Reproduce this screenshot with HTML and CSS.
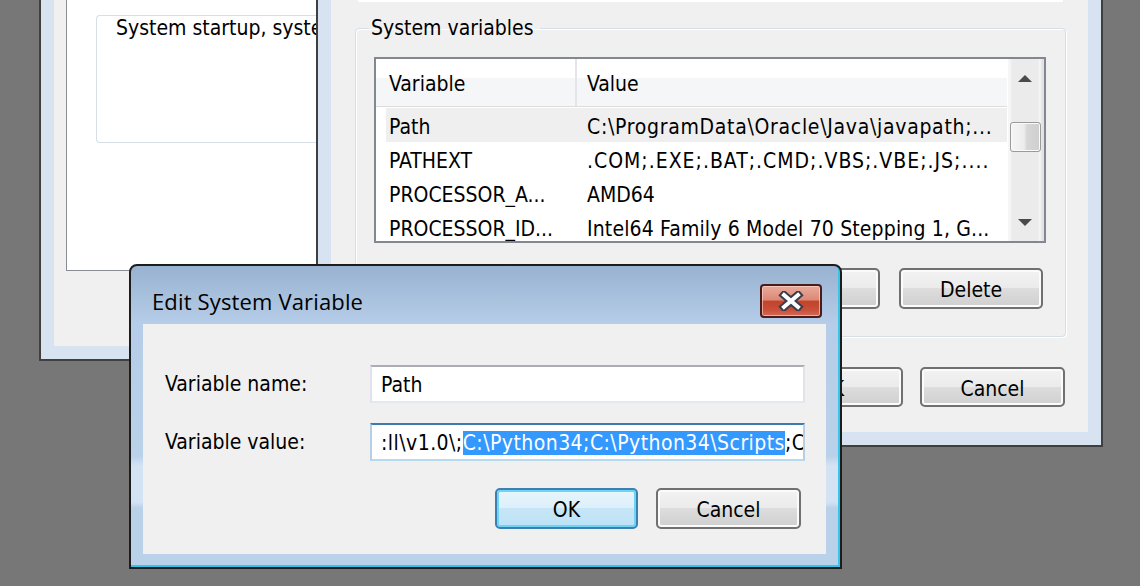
FILE: index.html
```html
<!DOCTYPE html>
<html>
<head>
<meta charset="utf-8">
<title>Edit System Variable</title>
<link rel="stylesheet" href="styles.css">
</head>
<body>
<div class="desktop">

  <section class="win win-sysprops">
    <div class="win-client sysprops-client">
      <div class="tab-panel">
        <div class="group-box startup-group">
          <p class="group-text">System startup, system</p>
        </div>
      </div>
    </div>
  </section>

  <section class="win win-env">
    <div class="win-client env-client">
      <div class="group-end"></div>
      <fieldset class="sysvars">
        <legend>System variables</legend>
        <div class="listview">
          <div class="lv-main">
            <div class="lv-header">
              <div class="lv-hcell hc1">Variable</div>
              <div class="lv-hcell hc2">Value</div>
            </div>
            <div class="lv-row selected"><div class="c1">Path</div><div class="c2 path">C:\ProgramData\Oracle\Java\javapath;...</div></div>
            <div class="lv-row"><div class="c1">PATHEXT</div><div class="c2 ext">.COM;.EXE;.BAT;.CMD;.VBS;.VBE;.JS;....</div></div>
            <div class="lv-row"><div class="c1">PROCESSOR_A...</div><div class="c2">AMD64</div></div>
            <div class="lv-row"><div class="c1">PROCESSOR_ID...</div><div class="c2 cpu">Intel64 Family 6 Model 70 Stepping 1, G...</div></div>
          </div>
          <div class="vscroll">
            <div class="sb-btn"><svg width="14" height="7" viewBox="0 0 14 7"><polygon points="0,7 7,0 14,7" fill="#4a4a4a"/></svg></div>
            <div class="sb-thumb"></div>
            <div class="sb-space"></div>
            <div class="sb-btn"><svg width="14" height="7" viewBox="0 0 14 7"><polygon points="0,0 14,0 7,7" fill="#4a4a4a"/></svg></div>
          </div>
        </div>
        <div class="btn-row group-buttons">
          <button class="btn">New...</button>
          <button class="btn">Edit...</button>
          <button class="btn">Delete</button>
        </div>
      </fieldset>
      <div class="btn-row env-buttons">
        <button class="btn wide">OK</button>
        <button class="btn wide">Cancel</button>
      </div>
    </div>
  </section>

  <section class="dialog">
    <header class="titlebar">
      <span class="title">Edit System Variable</span>
      <button class="close" aria-label="Close">
        <svg width="26" height="20" viewBox="0 0 26 20">
          <path d="M6 4 L20 16 M20 4 L6 16" stroke="#3b3d4c" stroke-width="8" stroke-linecap="square" fill="none"/>
          <path d="M6 4 L20 16 M20 4 L6 16" stroke="#ffffff" stroke-width="4" stroke-linecap="square" fill="none"/>
        </svg>
      </button>
    </header>
    <div class="dialog-client">
      <div class="field-row">
        <label class="field-label">Variable name:</label>
        <div class="textbox"><span class="tb-text">Path</span></div>
      </div>
      <div class="field-row second">
        <label class="field-label">Variable value:</label>
        <div class="textbox focused"><span class="tb-text value-text">:ll\v1.0\;<span class="sel">C:\Python34;C:\Python34\Scripts</span>;C</span></div>
      </div>
      <div class="btn-row dialog-buttons">
        <button class="btn default">OK</button>
        <button class="btn cancel">Cancel</button>
      </div>
    </div>
  </section>

</div>
</body>
</html>
```
FILE: styles.css
```css
* { box-sizing: border-box; }
html, body { margin: 0; padding: 0; }
body {
  width: 1140px;
  height: 586px;
  overflow: hidden;
  background: #777777;
  font-family: "DejaVu Sans Condensed", "DejaVu Sans", sans-serif;
  font-stretch: condensed;
  font-size: 21px;
  color: #000;
}
.desktop { position: relative; width: 1140px; height: 586px; overflow: hidden; }

/* generic window */
.win {
  position: absolute;
  border: 2px solid #3f3f3f;
  background: #d7e3f1;
  padding: 13px;
  display: flex;
  flex-direction: column;
}
.win-client {
  flex: 1;
  background: #f0f0f0;
  display: flex;
  flex-direction: column;
  justify-content: flex-end;
}

/* System Properties (back) */
.win-sysprops { left: 39px; top: -300px; width: 292px; height: 661px; overflow: hidden; }
.sysprops-client { padding: 0 0 75px 12px; overflow: hidden; }
.tab-panel {
  flex: 1;
  background: #fff;
  border: 1px solid #898c95;
  border-right: none;
  display: flex;
  flex-direction: column;
  justify-content: flex-end;
  padding: 0 0 127px 29px;
  overflow: hidden;
}
.startup-group {
  border: 1px solid #d5dfe5;
  border-right: none;
  border-radius: 4px 0 0 4px;
  padding: 0 0 102px 19px;
  overflow: hidden;
}
.group-text { margin: 0; line-height: 24px; white-space: nowrap; overflow: hidden; }

/* Environment Variables window */
.win-env { left: 316px; top: -60px; width: 787px; height: 507px; }
.env-client { padding: 0 22px 25px 24px; }
.group-end {
  height: 3px;
  margin: 0 3px 14px 3px;
  border-top: 1px solid #dde4ea;
  background: #fff;
}
.sysvars {
  margin: 0;
  min-width: 0;
  border: 1px solid #d5dfe5;
  border-radius: 4px;
  padding: 17px 19px 27px 18px;
  box-shadow: inset 1px 1px 0 #fff, 1px 1px 0 #fff;
}
.sysvars legend {
  line-height: 24px;
  padding: 0 6px 0 2px;
  margin-left: -5px;
}
.listview {
  height: 186px;
  border: 2px solid #828790;
  background: #fff;
  display: flex;
}
.lv-main { flex: 1; overflow: hidden; margin-right: 1px; }
.lv-header {
  height: 48px;
  display: flex;
  background: linear-gradient(#ffffff 0, #ffffff 40%, #f5f6f7 40%, #f5f6f7 100%);
  border-bottom: 1px solid #dcdcdc;
  margin-bottom: 1px;
}
.lv-hcell { display: flex; align-items: center; white-space: nowrap; padding-top: 3px; }
.hc1 { width: 201px; padding-left: 13px; border-right: 2px solid #e3e5e8; }
.hc2 { flex: 1; padding-left: 10px; }
.lv-row {
  height: 34px;
  margin-left: 10px;
  padding-top: 3px;
  display: flex;
  align-items: center;
  white-space: nowrap;
}
.lv-row.selected { background: #efefef; }
.lv-row .c1 { width: 191px; padding-left: 3px; overflow: hidden; }
.lv-row .c2 { flex: 1; padding-left: 10px; overflow: hidden; }
.lv-row .c2.path { letter-spacing: 0.7px; }
.lv-row .c2.ext { letter-spacing: 1px; }
.lv-row .c2.cpu { letter-spacing: 0.15px; }

.vscroll {
  width: 36px;
  display: flex;
  flex-direction: column;
  align-items: center;
  padding-right: 2px;
  background: linear-gradient(to right, #f6f6f6 0, #f6f6f6 2px, #ebebeb 4px, #ebebeb 30px, #f7f7f7 32px, #e2e2e2 34px);
}
.sb-btn { height: 38px; width: 100%; display: flex; align-items: center; justify-content: center; }
.sb-thumb {
  width: 31px;
  height: 30px;
  margin-top: 25px;
  border: 1px solid #9a9a9a;
  border-radius: 3px;
  background: linear-gradient(to right, #f6f6f6 0, #ececec 45%, #d6d6d6 55%, #cfcfcf 100%);
  box-shadow: inset 0 0 0 1px #fafafa;
}
.sb-space { flex: 1; }

/* buttons */
.btn-row { display: flex; justify-content: flex-end; }
.btn {
  font: inherit;
  color: #000;
  width: 144px;
  height: 41px;
  padding: 3px 0 0 0;
  border: 2px solid #707070;
  border-radius: 5px;
  background: linear-gradient(#f2f2f2 0%, #ebebeb 50%, #dddddd 50%, #cfcfcf 100%);
  box-shadow: inset 0 0 0 2px #fbfbfb;
}
.group-buttons { margin-top: 25px; gap: 19px; padding-right: 3px; }
.env-buttons { margin-top: 30px; gap: 17px; padding-right: 1px; }
.btn.wide { width: 145px; height: 40px; }

/* Edit System Variable dialog */
.dialog {
  position: absolute;
  left: 129px;
  top: 264px;
  width: 713px;
  height: 305px;
  border: 2px solid #1d1d1d;
  border-radius: 8px 8px 0 0;
  background: linear-gradient(#98b2d0 0px, #b5cde8 58px, #bad1ea 190px, #d4e3f3 200px, #d4e3f3 236px, #bad1ea 242px, #bad1ea 100%);
  box-shadow: inset -2px -2px 0 #35c5e8;
  display: flex;
  flex-direction: column;
}
.titlebar {
  height: 58px;
  padding: 18px 18px 0 21px;
  display: flex;
  justify-content: space-between;
  align-items: flex-start;
}
.title {
  font-family: "Open Sans", "Noto Sans", sans-serif;
  font-stretch: normal;
  font-size: 22px;
  line-height: 34px;
  letter-spacing: 0.15px;
  color: #000;
}
.close {
  width: 62px;
  height: 34px;
  padding: 0;
  border: 2px solid #4a1c1c;
  border-radius: 4px;
  background: linear-gradient(#eaaa9b 0%, #dc8a77 45%, #c2432a 52%, #c8503a 80%, #d46a55 100%);
  box-shadow: inset 0 0 0 1px rgba(255, 220, 210, 0.6);
  display: flex;
  align-items: center;
  justify-content: center;
}
.close svg { display: block; }
.dialog-client {
  height: 230px;
  margin: 0 14px 0 12px;
  background: #f0f0f0;
  padding: 41px 21px 25px 22px;
  display: flex;
  flex-direction: column;
}
.field-row { display: flex; align-items: center; height: 38px; }
.field-row.second { margin-top: 20px; }
.field-label { width: 205px; white-space: nowrap; }
.textbox {
  flex: 1;
  height: 38px;
  background: #fff;
  border: 2px solid;
  border-color: #abadb3 #e2e3ea #e3e9ef #e2e3ea;
  padding: 2px 0 0 9px;
  display: flex;
  align-items: center;
  overflow: hidden;
  white-space: nowrap;
}
.textbox.focused {
  border-color: #3d7bad #b5cfe7 #b7d9ed #b5cfe7;
  padding-left: 9px;
}
.tb-text { white-space: nowrap; }
.value-text { letter-spacing: 0.45px; }
.sel { background: #3399ff; color: #fff; }
.dialog-buttons { margin-top: 27px; gap: 18px; padding-right: 4px; }
.dialog-buttons .btn.default {
  width: 143px;
  border-color: #3c7fb1;
  background: linear-gradient(#e8f5fc 0%, #dcf0fb 50%, #c6e6f7 50%, #bde2f6 100%);
  box-shadow: inset 0 0 0 2px #6fd3f4;
}
.dialog-buttons .btn.cancel { width: 145px; }
```
